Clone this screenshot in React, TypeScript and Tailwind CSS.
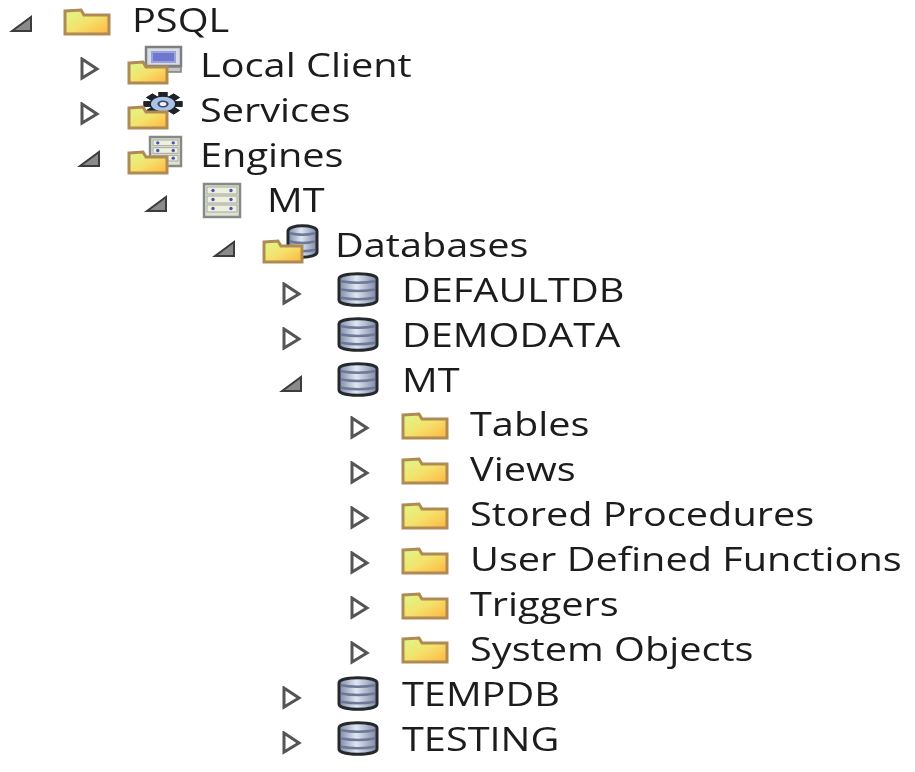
type IconName = "folder" | "client" | "services" | "engines" | "server" | "dbfolder" | "db";

type Node = { label: string; depth: number; open: boolean; icon: IconName };

const rows: Node[] = [
  { label: "PSQL", depth: 0, open: true, icon: "folder" },
  { label: "Local Client", depth: 1, open: false, icon: "client" },
  { label: "Services", depth: 1, open: false, icon: "services" },
  { label: "Engines", depth: 1, open: true, icon: "engines" },
  { label: "MT", depth: 2, open: true, icon: "server" },
  { label: "Databases", depth: 3, open: true, icon: "dbfolder" },
  { label: "DEFAULTDB", depth: 4, open: false, icon: "db" },
  { label: "DEMODATA", depth: 4, open: false, icon: "db" },
  { label: "MT", depth: 4, open: true, icon: "db" },
  { label: "Tables", depth: 5, open: false, icon: "folder" },
  { label: "Views", depth: 5, open: false, icon: "folder" },
  { label: "Stored Procedures", depth: 5, open: false, icon: "folder" },
  { label: "User Defined Functions", depth: 5, open: false, icon: "folder" },
  { label: "Triggers", depth: 5, open: false, icon: "folder" },
  { label: "System Objects", depth: 5, open: false, icon: "folder" },
  { label: "TEMPDB", depth: 4, open: false, icon: "db" },
  { label: "TESTING", depth: 4, open: false, icon: "db" },
];

function Arrow({ open }: { open: boolean }) {
  return (
    <svg width="26" height="24" viewBox="0 0 26 24" className="blur-[0.7px]">
      {open ? (
        <path d="M3 19 L22 19 L22 5 Z" fill="#8a8a8a" stroke="#3c3c3c" strokeWidth="2" />
      ) : (
        <path d="M5 2 L5 21 L20 12 Z" fill="#fff" stroke="#555" strokeWidth="3" />
      )}
    </svg>
  );
}

function Folder({ x, y, w, h }: { x: number; y: number; w: number; h: number }) {
  const tab = Math.round(w * 0.36);
  return (
    <path
      d={`M${x} ${y + 1} L${x + tab} ${y} L${x + tab + 3} ${y + 5} L${x + w} ${y + 5} L${x + w} ${y + h} L${x} ${y + h} Z`}
      fill="url(#folderFill)"
      stroke="#b08a55"
      strokeWidth="3"
    />
  );
}

function Server({ x, y, w, h }: { x: number; y: number; w: number; h: number }) {
  const slot = (h - 6) / 3;
  return (
    <g>
      <rect x={x} y={y} width={w} height={h} fill="#dfe3d4" stroke="#868a86" strokeWidth="2.5" />
      {[0, 1, 2].map((i) => (
        <g key={i}>
          <rect x={x + 3} y={y + 3 + i * slot} width={w - 6} height={slot - 2} fill="#eef0dc" stroke="#a6aaa0" strokeWidth="1" />
          <circle cx={x + w * 0.25} cy={y + 2 + i * slot + slot / 2} r="1.7" fill="#4a54b8" />
          <circle cx={x + w * 0.75} cy={y + 2 + i * slot + slot / 2} r="1.7" fill="#4a54b8" />
        </g>
      ))}
    </g>
  );
}

function Cylinder({ x, y, w, h }: { x: number; y: number; w: number; h: number }) {
  const band = h / 4;
  return (
    <g>
      <path
        d={`M${x} ${y + 6} C${x} ${y - 1} ${x + w} ${y - 1} ${x + w} ${y + 6} L${x + w} ${y + h - 6} C${x + w} ${y + h + 1} ${x} ${y + h + 1} ${x} ${y + h - 6} Z`}
        fill="url(#dbFill)"
        stroke="#25282c"
        strokeWidth="3"
      />
      {[1, 2, 3].map((i) => (
        <path key={i} d={`M${x + 2} ${y + i * band} Q${x + w / 2} ${y + i * band + 3} ${x + w - 2} ${y + i * band}`} fill="none" stroke="#6f7896" strokeWidth="2.5" />
      ))}
    </g>
  );
}

function Gear({ cx, cy }: { cx: number; cy: number }) {
  const teeth = [0, 45, 90, 135, 180, 225, 270, 315];
  return (
    <g transform={`translate(${cx} ${cy}) scale(1.5 0.92)`}>
      {teeth.map((a) => (
        <rect key={a} x={-3} y={-13} width="6" height="26" fill="#1f2226" transform={`rotate(${a})`} />
      ))}
      <circle r="8.5" fill="#a9c2e6" stroke="#1f2226" strokeWidth="1" />
      <circle r="3" fill="#eef2f8" stroke="#3c4a66" strokeWidth="1.5" />
    </g>
  );
}

function TreeIcon({ name }: { name: IconName }) {
  return (
    <svg width="60" height="45" viewBox="0 0 60 45" className="-mt-[2.5px] block overflow-visible blur-[0.7px]">
      <defs>
        <linearGradient id="folderFill" x1="0" y1="0" x2="1" y2="1">
          <stop offset="0" stopColor="#dcf88a" />
          <stop offset="0.5" stopColor="#f4e26c" />
          <stop offset="1" stopColor="#ffb43f" />
        </linearGradient>
        <linearGradient id="dbFill" x1="0" y1="0" x2="1" y2="0">
          <stop offset="0" stopColor="#7d8aa8" />
          <stop offset="0.45" stopColor="#dfe7f2" />
          <stop offset="1" stopColor="#7c88a6" />
        </linearGradient>
      </defs>
      {name === "folder" && <Folder x={3} y={12} w={44} h={24} />}
      {name === "client" && (
        <g>
          <rect x={16} y={4} width={35} height={19} fill="#d8dce4" stroke="#7d8080" strokeWidth="2.5" />
          <rect x={22} y={9} width={23} height={10} fill="#6f78d0" stroke="#9aa2d8" strokeWidth="2" />
          <rect x={28} y={24} width={23} height={5} fill="#c4c8bc" stroke="#7d8080" strokeWidth="1.5" />
          <Folder x={-1} y={19} w={38} h={21} />
        </g>
      )}
      {name === "services" && (
        <g>
          <Gear cx={33} cy={16} />
          <Folder x={-1} y={19} w={38} h={21} />
        </g>
      )}
      {name === "engines" && (
        <g>
          <Server x={20} y={4} w={31} h={29} />
          <Folder x={-1} y={19} w={38} h={21} />
        </g>
      )}
      {name === "server" && <Server x={7} y={6} w={36} h={33} />}
      {name === "dbfolder" && (
        <g>
          <Cylinder x={23} y={3} w={29} h={33} />
          <Folder x={-1} y={19} w={38} h={21} />
        </g>
      )}
      {name === "db" && <Cylinder x={7} y={6} w={38} h={33} />}
    </svg>
  );
}

function TreeRow({ node }: { node: Node }) {
  return (
    <div className="flex h-[44.9px] items-center pb-[4px]" style={{ paddingLeft: node.depth * 67.5 }}>
      <span className="flex w-[62px] shrink-0 pl-[9px] pt-[8px]">
        <Arrow open={node.open} />
      </span>
      <span className="h-[40px] w-[71px] shrink-0">
        <TreeIcon name={node.icon} />
      </span>
      <span className="-ml-[1px] origin-left scale-x-[1.24] whitespace-nowrap font-['Open_Sans',sans-serif] text-[32px] leading-none text-[#1c1c1c] blur-[0.4px]">
        {node.label}
      </span>
    </div>
  );
}

export default function App() {
  return (
    <div className="h-[772px] w-[915px] overflow-hidden bg-white">
      {rows.map((node, i) => (
        <TreeRow key={`${node.label}-${i}`} node={node} />
      ))}
    </div>
  );
}
